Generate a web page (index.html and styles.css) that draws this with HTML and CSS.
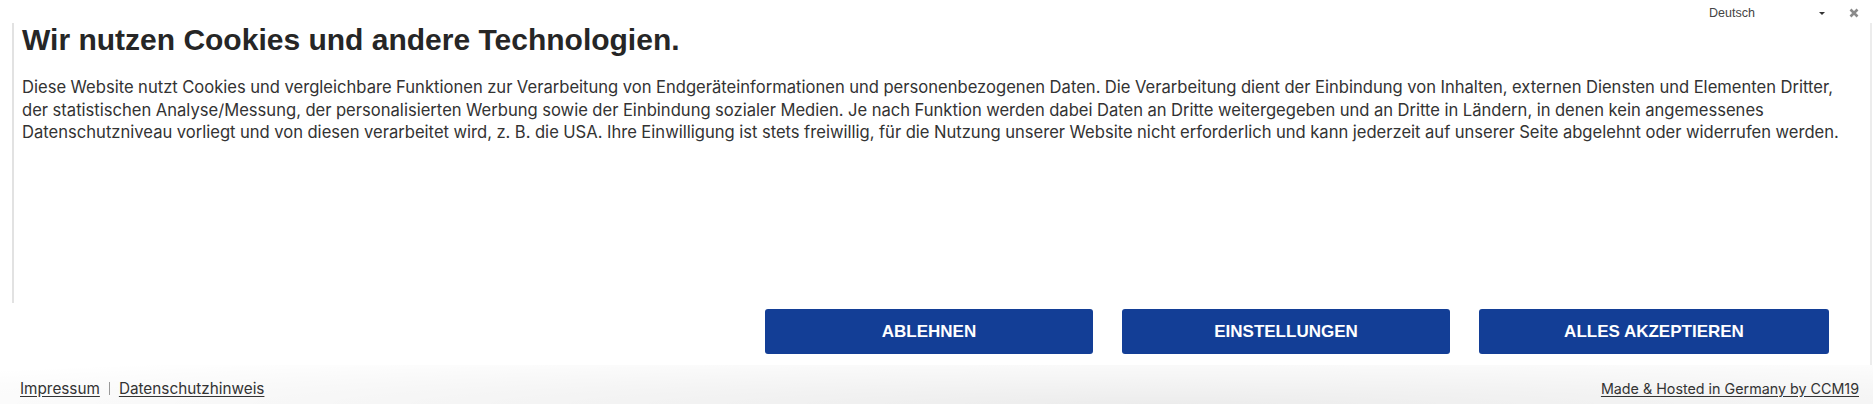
FILE: index.html
```html
<!DOCTYPE html>
<html lang="de">
<head>
<meta charset="utf-8">
<title>Cookies</title>
<link rel="stylesheet" href="styles.css">
</head>
<body>
<div class="banner">
  <div class="topbar">
    <div class="lang">
      <span class="lang-label">Deutsch</span>
      <span class="caret"></span>
    </div>
    <button class="close" aria-label="Schließen">
      <svg width="10" height="10" viewBox="0 0 10 10"><path d="M1.5 1.5 L8.5 8.5 M8.5 1.5 L1.5 8.5" stroke="#8a8a8a" stroke-width="2.6" stroke-linecap="butt"/></svg>
    </button>
  </div>
  <div class="scroll">
    <div class="content">
      <h1 class="title">Wir nutzen Cookies und andere Technologien.</h1>
      <p class="text">Diese Website nutzt Cookies und vergleichbare Funktionen zur Verarbeitung von Endgeräteinformationen und personenbezogenen Daten. Die Verarbeitung dient der Einbindung von Inhalten, externen Diensten und Elementen Dritter,<br>der statistischen Analyse/Messung, der personalisierten Werbung sowie der Einbindung sozialer Medien. Je nach Funktion werden dabei Daten an Dritte weitergegeben und an Dritte in Ländern, in denen kein angemessenes<br>Datenschutzniveau vorliegt und von diesen verarbeitet wird, z. B. die USA. Ihre Einwilligung ist stets freiwillig, für die Nutzung unserer Website nicht erforderlich und kann jederzeit auf unserer Seite abgelehnt oder widerrufen werden.</p>
    </div>
    <div class="actions">
      <button class="btn btn-reject">ABLEHNEN</button>
      <button class="btn btn-settings">EINSTELLUNGEN</button>
      <button class="btn btn-accept">ALLES AKZEPTIEREN</button>
    </div>
  </div>
  <div class="footer">
    <div class="links">
      <a href="#" class="link">Impressum</a>
      <span class="sep"></span>
      <a href="#" class="link">Datenschutzhinweis</a>
    </div>
    <a href="#" class="link link-credit">Made &amp; Hosted in Germany by CCM19</a>
  </div>
</div>
</body>
</html>
```

FILE: styles.css
```css
html, body {
  margin: 0;
  padding: 0;
  background: #fff;
}

body {
  font-family: Inter, "Noto Sans", sans-serif;
  color: #333;
  width: 1873px;
  height: 404px;
  overflow: hidden;
}

.banner {
  position: relative;
  width: 1873px;
  height: 404px;
  display: flex;
  flex-direction: column;
}

.topbar {
  position: absolute;
  top: 0;
  right: 0;
  display: flex;
  align-items: center;
  height: 26px;
}

.lang {
  display: flex;
  align-items: center;
  width: 116px;
  font-family: "Liberation Sans", Arial, sans-serif;
  font-size: 12.5px;
  color: #444;
}

.lang-label {
  flex: 1;
}

.caret {
  width: 0;
  height: 0;
  border-left: 3px solid transparent;
  border-right: 3px solid transparent;
  border-top: 3px solid #333;
}

.close {
  border: 0;
  background: none;
  padding: 0;
  margin: 0 14px 0 24px;
  width: 10px;
  height: 10px;
  display: flex;
  cursor: pointer;
}

.scroll {
  margin: 23px 1px 0 12px;
  border-right: 2px solid #ececec;
  height: 342px;
  box-sizing: border-box;
  display: flex;
  flex-direction: column;
}

.content {
  border-left: 2px solid #e2e2e2;
  padding: 0 8px 0 8px;
  height: 280px;
  box-sizing: border-box;
}

.title {
  margin: 0;
  font-family: "Liberation Sans", Arial, sans-serif;
  font-weight: bold;
  font-size: 30px;
  line-height: 34px;
  color: #262626;
}

.text {
  margin: 19px 0 0;
  font-size: 16.6px;
  line-height: 22.7px;
  word-spacing: -0.2px;
  white-space: nowrap;
  color: #333;
}

.actions {
  display: flex;
  justify-content: flex-end;
  gap: 29px;
  padding-right: 41px;
  margin-top: 6px;
}

.btn {
  height: 45px;
  border: 0;
  border-radius: 3px;
  background: #133e96;
  color: #fff;
  font-family: "Liberation Sans", Arial, sans-serif;
  font-weight: bold;
  font-size: 17px;
  cursor: pointer;
  padding: 0;
}

.btn-reject,
.btn-settings {
  width: 328px;
}

.btn-accept {
  width: 350px;
}

.footer {
  flex: 1;
  display: flex;
  justify-content: space-between;
  align-items: center;
  padding: 7px 14px 0 20px;
  font-size: 15.3px;
  background: radial-gradient(ellipse 1500px 55px at 62% 100%, rgba(0,0,0,0.075), rgba(0,0,0,0) 100%);
}

.links {
  display: flex;
  align-items: center;
}

.link {
  color: #333;
  text-decoration: underline;
  text-underline-offset: 2px;
}

.link-credit {
  font-size: 14.3px;
}

.sep {
  display: inline-block;
  width: 1px;
  height: 13px;
  background: #999;
  margin: 0 9px;
}
```
